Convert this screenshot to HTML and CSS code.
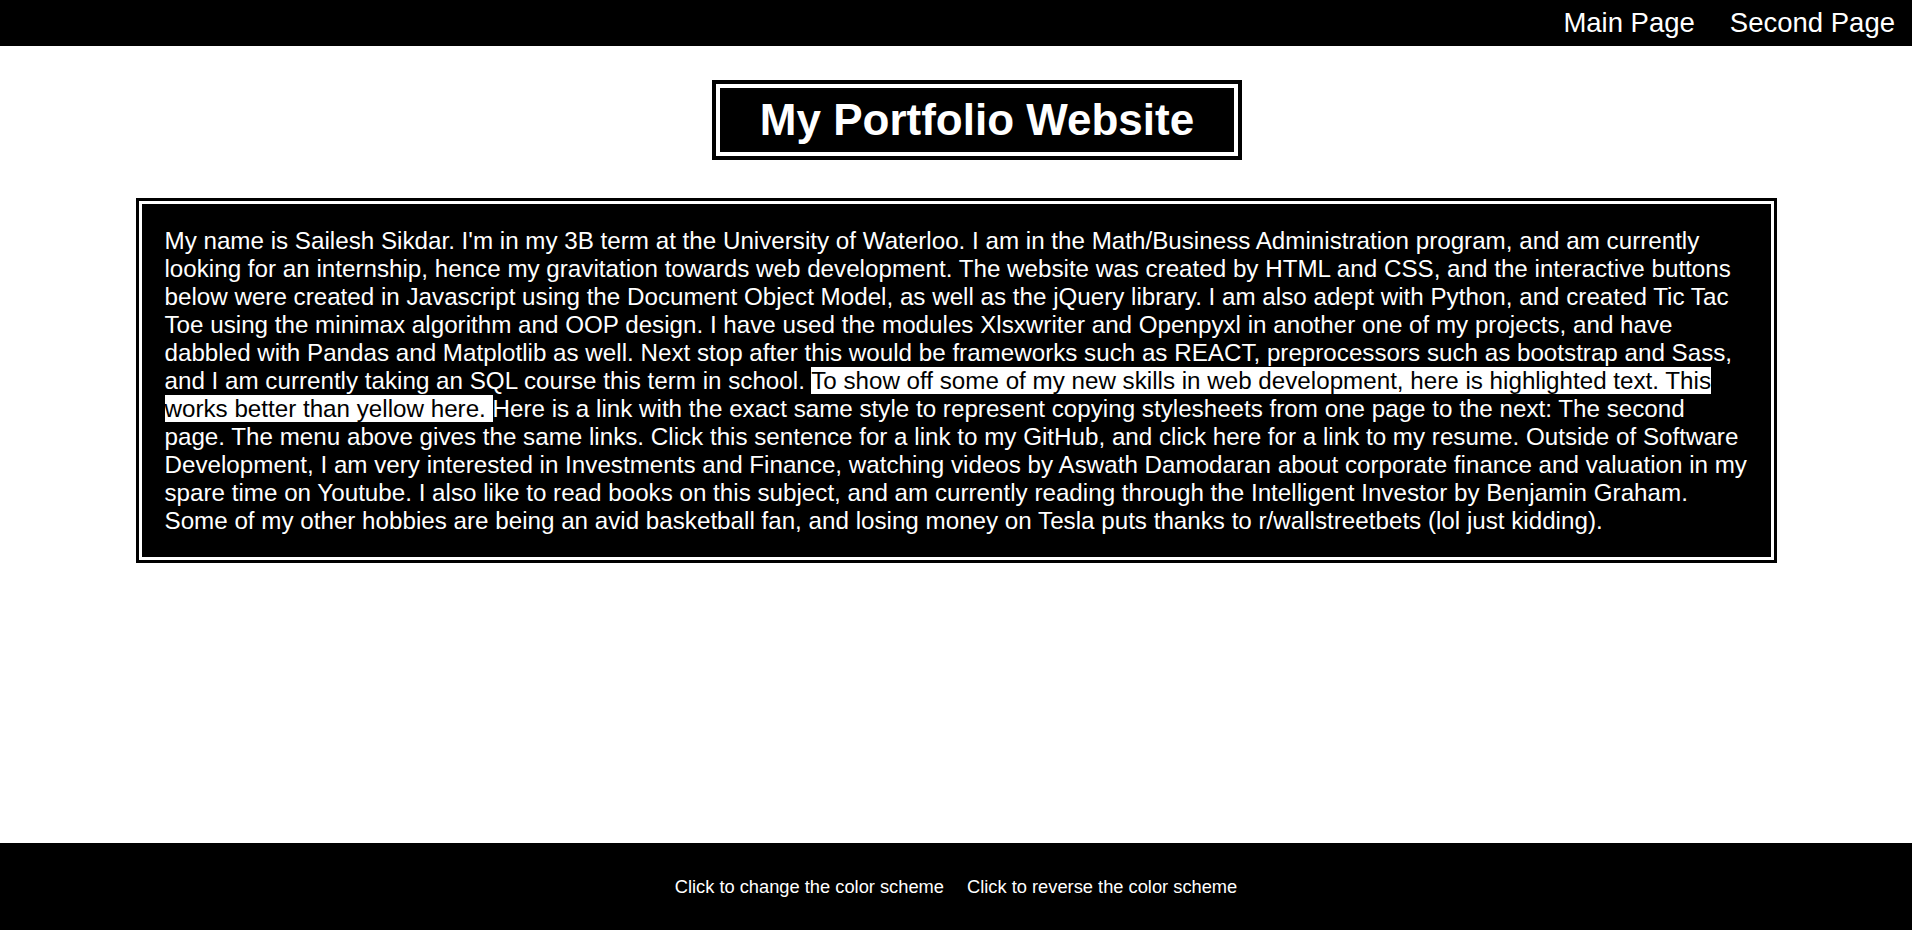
FILE: index.html
```html
<!DOCTYPE html>
<html lang="en">
<head>
<meta charset="utf-8">
<title>My Portfolio Website</title>
<link rel="stylesheet" href="styles.css">
</head>
<body>
<nav class="topnav">
  <a class="navlink" href="#">Main Page</a>
  <a class="navlink" href="#">Second Page</a>
</nav>
<main class="main">
  <h1 class="title">My Portfolio Website</h1>
  <div class="about">
    <p class="about-text">My name is Sailesh Sikdar. I'm in my 3B term at the University of Waterloo. I am in the Math/Business Administration program, and am currently looking for an internship, hence my gravitation towards web development. The website was created by HTML and CSS, and the interactive buttons below were created in Javascript using the Document Object Model, as well as the jQuery library. I am also adept with Python, and created Tic Tac Toe using the minimax algorithm and OOP design. I have used the modules Xlsxwriter and Openpyxl in another one of my projects, and have dabbled with Pandas and Matplotlib as well. Next stop after this would be frameworks such as REACT, preprocessors such as bootstrap and Sass, and I am currently taking an SQL course this term in school. <span class="highlight">To show off some of my new skills in web development, here is highlighted text. This works better than yellow here. </span>Here is a link with the exact same style to represent copying stylesheets from one page to the next: <a class="plainlink" href="#">The second page</a>. The menu above gives the same links. <a class="plainlink" href="#">Click this sentence for a link to my GitHub</a>, and click <a class="plainlink" href="#">here</a> for a link to my resume. Outside of Software Development, I am very interested in Investments and Finance, watching videos by Aswath Damodaran about corporate finance and valuation in my spare time on Youtube. I also like to read books on this subject, and am currently reading through the Intelligent Investor by Benjamin Graham. Some of my other hobbies are being an avid basketball fan, and losing money on Tesla puts thanks to r/wallstreetbets (lol just kidding).</p>
  </div>
</main>
<footer class="footer">
  <button class="footbtn" type="button">Click to change the color scheme</button>
  <button class="footbtn" type="button">Click to reverse the color scheme</button>
</footer>
</body>
</html>
```

FILE: styles.css
```css
html, body {
  margin: 0;
  padding: 0;
}

body {
  min-height: 100vh;
  display: flex;
  flex-direction: column;
  background: #ffffff;
  color: #ffffff;
  font-family: "Liberation Sans", Arial, sans-serif;
}

.topnav {
  height: 46px;
  background: #000000;
  display: flex;
  justify-content: flex-end;
  align-items: center;
  gap: 35px;
  padding-right: 17px;
}

.navlink {
  color: #ffffff;
  text-decoration: none;
  font-size: 27.5px;
  line-height: 1;
}

.main {
  display: flex;
  flex-direction: column;
  align-items: center;
}

.title {
  margin: 34px 0 0 42px;
  background: #000000;
  background-clip: padding-box;
  border: 12px double #000000;
  padding: 3px 36px;
  font-size: 44px;
  font-weight: bold;
  line-height: 50px;
  color: #ffffff;
}

.about {
  margin-top: 38px;
  width: 1641px;
  box-sizing: border-box;
  background: #000000;
  background-clip: padding-box;
  border: 9px double #000000;
  padding: 20px 20px 19px 20px;
}

.about-text {
  margin: 0;
  font-size: 24.2px;
  line-height: 28px;
  color: #ffffff;
}

.highlight {
  background: #ffffff;
  color: #000000;
}

.plainlink {
  color: inherit;
  text-decoration: none;
}

.footer {
  margin-top: auto;
  height: 87px;
  background: #000000;
  display: flex;
  justify-content: center;
  align-items: center;
  gap: 23px;
}

.footbtn {
  background: none;
  border: none;
  padding: 0;
  color: #ffffff;
  font-family: "Liberation Sans", Arial, sans-serif;
  font-size: 18.3px;
  cursor: pointer;
}
```
